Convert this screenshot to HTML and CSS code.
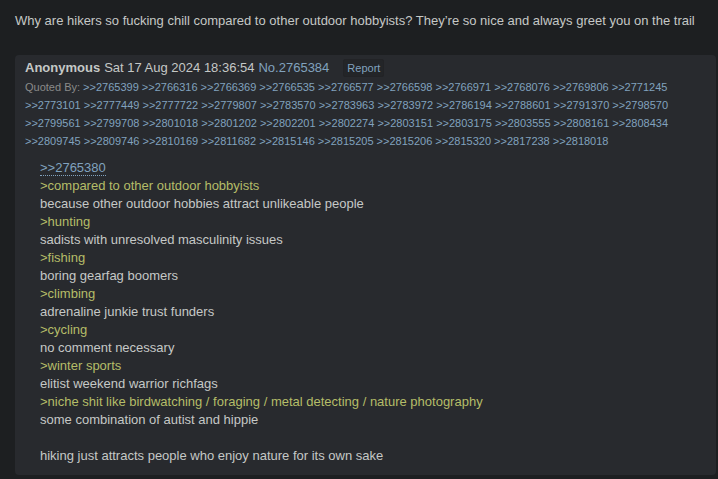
FILE: index.html
```html
<!DOCTYPE html>
<html lang="en">
<head>
  <meta charset="UTF-8" />
  <title>Thread</title>
  <link rel="stylesheet" href="styles.css">
</head>
<body>

  <!-- OP text -->
  <div class="op">Why are hikers so fucking chill compared to other outdoor hobbyists? They’re so nice and always greet you on the trail</div>

  <div class="post">
    <div class="post-info">
      <span class="name">Anonymous</span>
      <span class="date">Sat 17 Aug 2024 18:36:54</span>
      <a class="post-no">No.2765384</a>
      <button class="report">Report</button>
    </div>

    <div class="backlinks">
      <span class="label">Quoted By:</span>
      <a>&gt;&gt;2765399</a> <a>&gt;&gt;2766316</a> <a>&gt;&gt;2766369</a> <a>&gt;&gt;2766535</a> <a>&gt;&gt;2766577</a> <a>&gt;&gt;2766598</a> <a>&gt;&gt;2766971</a> <a>&gt;&gt;2768076</a> <a>&gt;&gt;2769806</a> <a>&gt;&gt;2771245</a>
      <a>&gt;&gt;2773101</a> <a>&gt;&gt;2777449</a> <a>&gt;&gt;2777722</a> <a>&gt;&gt;2779807</a> <a>&gt;&gt;2783570</a> <a>&gt;&gt;2783963</a> <a>&gt;&gt;2783972</a> <a>&gt;&gt;2786194</a> <a>&gt;&gt;2788601</a> <a>&gt;&gt;2791370</a> <a>&gt;&gt;2798570</a>
      <a>&gt;&gt;2799561</a> <a>&gt;&gt;2799708</a> <a>&gt;&gt;2801018</a> <a>&gt;&gt;2801202</a> <a>&gt;&gt;2802201</a> <a>&gt;&gt;2802274</a> <a>&gt;&gt;2803151</a> <a>&gt;&gt;2803175</a> <a>&gt;&gt;2803555</a> <a>&gt;&gt;2808161</a> <a>&gt;&gt;2808434</a>
      <a>&gt;&gt;2809745</a> <a>&gt;&gt;2809746</a> <a>&gt;&gt;2810169</a> <a>&gt;&gt;2811682</a> <a>&gt;&gt;2815146</a> <a>&gt;&gt;2815205</a> <a>&gt;&gt;2815206</a> <a>&gt;&gt;2815320</a> <a>&gt;&gt;2817238</a> <a>&gt;&gt;2818018</a>
    </div>

    <blockquote class="message">
      <a class="quotelink">&gt;&gt;2765380</a><br>
      <span class="quote">&gt;compared to other outdoor hobbyists</span><br>
      because other outdoor hobbies attract unlikeable people<br>
      <span class="quote">&gt;hunting</span><br>
      sadists with unresolved masculinity issues<br>
      <span class="quote">&gt;fishing</span><br>
      boring gearfag boomers<br>
      <span class="quote">&gt;climbing</span><br>
      adrenaline junkie trust funders<br>
      <span class="quote">&gt;cycling</span><br>
      no comment necessary<br>
      <span class="quote">&gt;winter sports</span><br>
      elitist weekend warrior richfags<br>
      <span class="quote">&gt;niche shit like birdwatching / foraging / metal detecting / nature photography</span><br>
      some combination of autist and hippie<br>
      <br>
      hiking just attracts people who enjoy nature for its own sake
    </blockquote>
  </div>

</body>
</html>
```

FILE: styles.css
```css
body {
  font-family: "Liberation Sans", Arial, sans-serif;
  font-size: 13px;
  margin: 0;
  background-color: #1d1f21;
  color: #c5c8c6;
}
a {
  color: #81a2be;
  text-decoration: none;
  cursor: pointer;
}
.op {
  padding: 13px 15px 0 15px;
  line-height: 16px;
  height: 42px;
}
/* reply box */
.post {
  margin: 0 2px 4px 15px;
  padding: 3px 10px 0 10px;
  background-color: #282a2e;
  border-radius: 4px;
  height: 417px;
}
.post-info {
  display: flex;
  align-items: center;
  line-height: 18px;
  padding-top: 1px;
}
.name {
  font-weight: bold;
  margin-right: 4px;
}
.date {
  margin-right: 4px;
}
.post-no {
  margin-right: 14px;
}
.report {
  font-family: inherit;
  font-size: 11px;
  color: #81a2be;
  background-color: #232528;
  border: 1px solid #222326;
  border-radius: 2px;
  padding: 1px 3px;
  line-height: 14px;
}
.backlinks {
  font-size: 11px;
  line-height: 18px;
  margin-top: 1px;
}
.backlinks .label {
  color: #8a8a8a;
}
.message {
  margin: 9px 0 0 15px;
  line-height: 18px;
}
.quotelink {
  border-bottom: 1px dotted #81a2be;
}
.quote {
  color: #b5bd68;
}
```
